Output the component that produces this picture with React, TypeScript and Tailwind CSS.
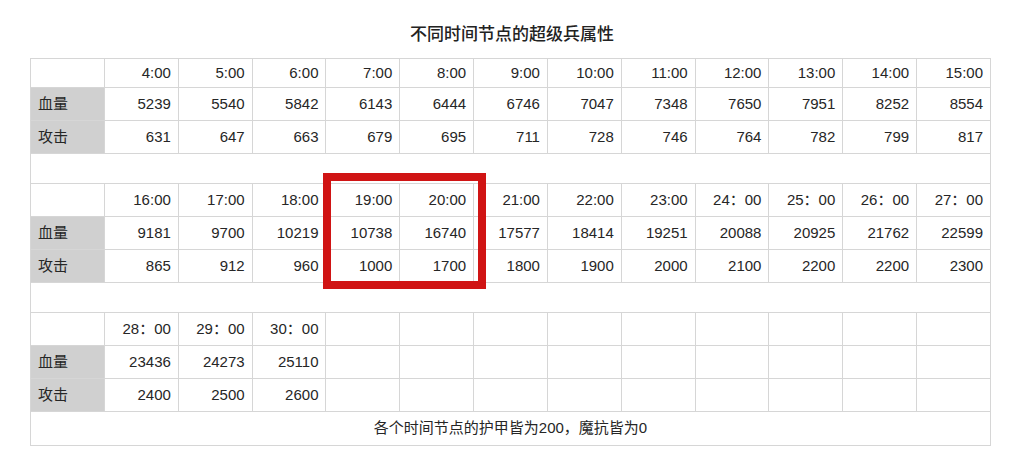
const ROWS = [
  {
    times: ["4:00", "5:00", "6:00", "7:00", "8:00", "9:00", "10:00", "11:00", "12:00", "13:00", "14:00", "15:00"],
    hp: ["5239", "5540", "5842", "6143", "6444", "6746", "7047", "7348", "7650", "7951", "8252", "8554"],
    atk: ["631", "647", "663", "679", "695", "711", "728", "746", "764", "782", "799", "817"],
  },
  {
    times: ["16:00", "17:00", "18:00", "19:00", "20:00", "21:00", "22:00", "23:00", "24：00", "25：00", "26：00", "27：00"],
    hp: ["9181", "9700", "10219", "10738", "16740", "17577", "18414", "19251", "20088", "20925", "21762", "22599"],
    atk: ["865", "912", "960", "1000", "1700", "1800", "1900", "2000", "2100", "2200", "2200", "2300"],
  },
  {
    times: ["28：00", "29：00", "30：00", "", "", "", "", "", "", "", "", ""],
    hp: ["23436", "24273", "25110", "", "", "", "", "", "", "", "", ""],
    atk: ["2400", "2500", "2600", "", "", "", "", "", "", "", "", ""],
  },
];

const cell = "border border-[#d6d6d6] text-right pr-[7px] align-middle";
const label = "border border-[#d6d6d6] bg-[#d0d0d0] text-left pl-[7px] align-middle";

function Block({ block, first }: { block: (typeof ROWS)[number]; first: boolean }) {
  return (
    <>
      <tr className={first ? "h-[29px]" : "h-[33px]"}>
        <td className="border border-[#d6d6d6]" />
        {block.times.map((t, i) => (
          <td key={i} className={cell}>
            {t}
          </td>
        ))}
      </tr>
      <tr className="h-[33px]">
        <td className={label}>血量</td>
        {block.hp.map((v, i) => (
          <td key={i} className={cell}>
            {v}
          </td>
        ))}
      </tr>
      <tr className="h-[33px]">
        <td className={label}>攻击</td>
        {block.atk.map((v, i) => (
          <td key={i} className={cell}>
            {v}
          </td>
        ))}
      </tr>
    </>
  );
}

export default function App() {
  const body: React.ReactNode[] = [];
  ROWS.forEach((block, i) => {
    body.push(<Block key={`b-${i}`} block={block} first={i === 0} />);
    if (i < ROWS.length - 1) {
      body.push(
        <tr key={`gap-${i}`} className="h-[30px]">
          <td colSpan={13} className="border border-[#d6d6d6]" />
        </tr>
      );
    }
  });

  return (
    <div
      className="h-[476px] w-[1024px] overflow-hidden bg-white text-[#262626]"
      style={{ fontFamily: '"Liberation Sans", "Noto Sans CJK SC", sans-serif' }}
    >
      <h1 className="pt-[24px] text-center text-[17px] font-medium leading-[22px] text-[#222222]">
        不同时间节点的超级兵属性
      </h1>
      <div className="relative ml-[30px] mt-[12px] w-[961px]">
        <table className="w-full table-fixed border-collapse text-[15px]">
          <colgroup>
            <col className="w-[74px]" />
            {Array.from({ length: 12 }).map((_, i) => (
              <col key={i} />
            ))}
          </colgroup>
          <tbody>
            {body}
            <tr className="h-[34px]">
              <td colSpan={13} className="border border-[#d6d6d6] text-center text-[15px]">
                各个时间节点的护甲皆为200，魔抗皆为0
              </td>
            </tr>
          </tbody>
        </table>
        <div className="absolute left-[293px] top-[115px] h-[116px] w-[163px] border-[8px] border-[#d01414]" />
      </div>
    </div>
  );
}
